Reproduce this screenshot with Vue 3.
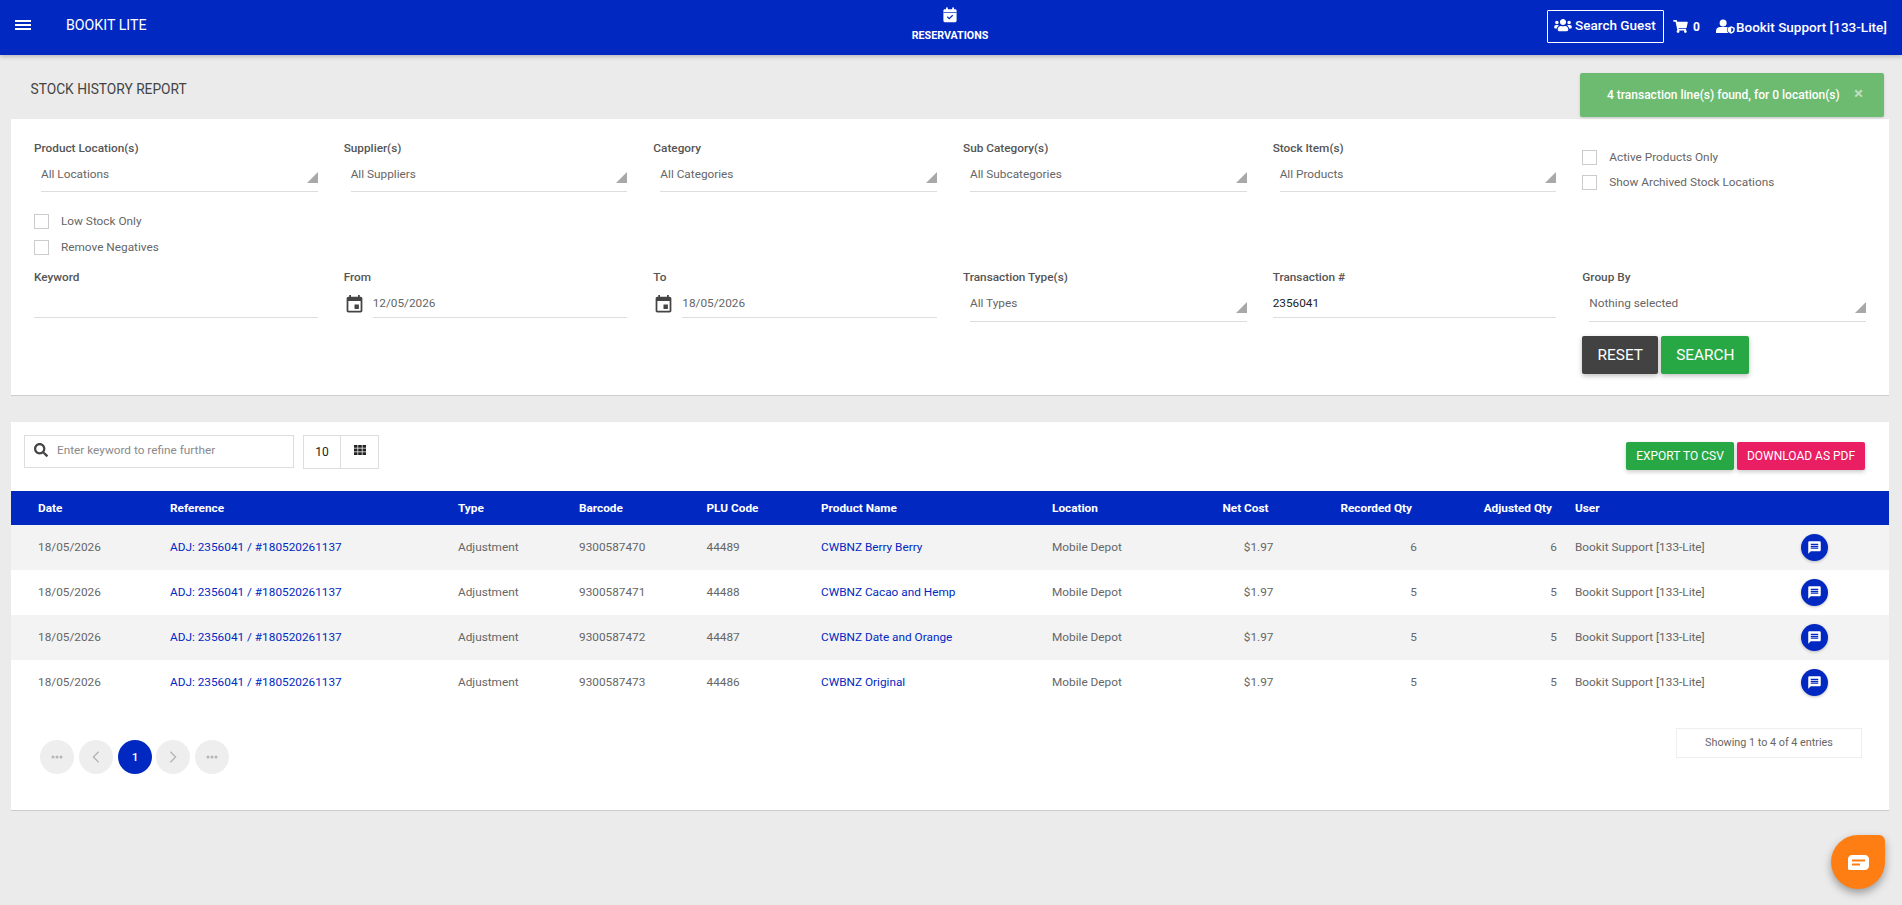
<script setup>
const filtersTop = [
  { label: 'Product Location(s)', value: 'All Locations' },
  { label: 'Supplier(s)', value: 'All Suppliers' },
  { label: 'Category', value: 'All Categories' },
  { label: 'Sub Category(s)', value: 'All Subcategories' },
  { label: 'Stock Item(s)', value: 'All Products' },
]
const rows = [
  { bar: '9300587470', plu: '44489', name: 'CWBNZ Berry Berry', rec: 6, adj: 6 },
  { bar: '9300587471', plu: '44488', name: 'CWBNZ Cacao and Hemp', rec: 5, adj: 5 },
  { bar: '9300587472', plu: '44487', name: 'CWBNZ Date and Orange', rec: 5, adj: 5 },
  { bar: '9300587473', plu: '44486', name: 'CWBNZ Original', rec: 5, adj: 5 },
]
const colWidths = [154, 288, 121, 127.5, 114.5, 231, 120, 111.5, 143.5, 140, 228, 99]
const messagePath = 'M20 2H4c-1.1 0-1.99.9-1.99 2L2 22l4-4h14c1.1 0 2-.9 2-2V4c0-1.1-.9-2-2-2zm-2 12H6v-2h12v2zm0-3H6V9h12v2zm0-3H6V6h12v2z'
const eventPath = 'M17 12h-5v5h5v-5zM16 1v2H8V1H6v2H5c-1.11 0-1.99.9-1.99 2L3 19c0 1.1.89 2 2 2h14c1.1 0 2-.9 2-2V5c0-1.1-.9-2-2-2h-1V1h-2zm3 18H5V8h14v11z'
</script>

<template>
  <div class="page">
    <header class="topbar">
      <div class="brand">
        <span class="burger"><i></i><i></i><i></i></span>
        <span class="brand-name">BOOKIT LITE</span>
      </div>
      <div class="nav-center">
        <svg class="res-icon" viewBox="0 0 16 16" width="16" height="16">
          <path fill="#fff" d="M4 .6h1.8v1.6h4.4V.6H12v1.6h1.2c.8 0 1.4.6 1.4 1.4v10.2c0 .8-.6 1.4-1.4 1.4H2.8c-.8 0-1.4-.6-1.4-1.4V3.600c0-.8.6-1.400 1.400-1.400H4z"/>
          <path fill="#0228c2" d="M1.400 5.100h13.200v.7H1.400z"/>
          <path fill="none" stroke="#0228c2" stroke-width="1.200" d="M5.300 9.800l1.900 1.800 3.500-3.400"/>
        </svg>
        <span class="res-text">RESERVATIONS</span>
      </div>
      <div class="top-right">
        <div class="search-guest">
          <svg viewBox="0 0 640 512" width="18" height="14"><path fill="#fff" d="M96 224c35.300 0 64-28.700 64-64s-28.700-64-64-64-64 28.700-64 64 28.700 64 64 64zm448 0c35.300 0 64-28.700 64-64s-28.700-64-64-64-64 28.700-64 64 28.700 64 64 64zm32 32h-64c-17.600 0-33.500 7.100-45.100 18.600 40.300 22.100 68.900 62 75.100 109.400h66c17.700 0 32-14.300 32-32v-32c0-35.300-28.700-64-64-64zm-256 0c61.900 0 112-50.100 112-112S381.900 32 320 32 208 82.100 208 144s50.100 112 112 112zm76.800 32h-8.300c-20.800 10-43.900 16-68.500 16s-47.600-6-68.500-16h-8.300C179.600 288 128 339.600 128 403.200V432c0 26.500 21.500 48 48 48h288c26.500 0 48-21.500 48-48v-28.800c0-63.600-51.600-115.200-115.200-115.200zm-223.700-13.400C161.500 263.100 145.600 256 128 256H64c-35.300 0-64 28.700-64 64v32c0 17.700 14.300 32 32 32h65.900c6.300-47.400 34.900-87.300 75.200-109.400z"/></svg>
          <span>Search Guest</span>
        </div>
        <div class="cart">
          <svg viewBox="0 0 576 512" width="15" height="13"><path fill="#fff" d="M528.120 301.319l47.273-208C578.806 78.301 567.391 64 551.990 64H159.208l-9.166-44.810C147.758 8.021 137.930 0 126.529 0H24C10.745 0 0 10.745 0 24v16c0 13.255 10.745 24 24 24h69.883l70.248 343.435C147.325 417.100 136 435.222 136 456c0 30.928 25.072 56 56 56s56-25.072 56-56c0-15.674-6.447-29.835-16.824-40h209.647C430.447 426.165 424 440.326 424 456c0 30.928 25.072 56 56 56s56-25.072 56-56c0-22.172-12.888-41.332-31.579-50.405l5.517-24.276c3.413-15.018-8.002-29.319-23.403-29.319H218.117l-6.545-32h293.145c11.206 0 20.920-7.754 23.403-18.681z"/></svg>
          <span>0</span>
        </div>
        <div class="user">
          <svg viewBox="0 0 20 15" width="19" height="15">
            <circle cx="7.500" cy="3.800" r="3.700" fill="#fff"/>
            <path fill="#fff" d="M0 14v-1.800C0 9.600 2 8 4.500 8h6c.9 0 1.700.2 2.400.6-.5.2-.9.400-1.200.6v2c0 1.200.6 2.400 1.400 3.200H.5c-.3 0-.5-.2-.5-.4z"/>
            <path fill="#fff" d="M16 7.300l3.700 1.500v2.400c0 1.800-1.500 3.300-3.700 3.800-2.200-.5-3.700-2-3.700-3.800V8.800z"/>
            <path fill="#0228c2" d="M16 8.800l2.200.9v1.500c0 1-.9 1.900-2.200 2.300z"/>
          </svg>
          <span>Bookit Support [133-Lite]</span>
        </div>
      </div>
    </header>

    <div class="title-row">
      <h1>STOCK HISTORY REPORT</h1>
      <div class="alert">
        <span>4 transaction line(s) found, for 0 location(s)</span>
        <span class="alert-x">×</span>
      </div>
    </div>

    <section class="card filters">
      <div class="grid grid-top">
        <div v-for="f in filtersTop" :key="f.label" class="field">
          <label>{{ f.label }}</label>
          <div class="select"><span>{{ f.value }}</span><i class="tri"></i></div>
        </div>
        <div class="checks checks-right">
          <div class="check"><i class="box"></i><span>Active Products Only</span></div>
          <div class="check"><i class="box"></i><span>Show Archived Stock Locations</span></div>
        </div>
      </div>
      <div class="checks checks-left">
        <div class="check"><i class="box"></i><span>Low Stock Only</span></div>
        <div class="check"><i class="box"></i><span>Remove Negatives</span></div>
      </div>
      <div class="grid grid-bottom">
        <div class="field">
          <label>Keyword</label>
          <div class="input"></div>
        </div>
        <div class="field">
          <label>From</label>
          <div class="date">
            <svg viewBox="0 0 24 24" width="21" height="21"><path fill="#444" :d="eventPath"/></svg>
            <div class="input"><span>12/05/2026</span></div>
          </div>
        </div>
        <div class="field">
          <label>To</label>
          <div class="date">
            <svg viewBox="0 0 24 24" width="21" height="21"><path fill="#444" :d="eventPath"/></svg>
            <div class="input"><span>18/05/2026</span></div>
          </div>
        </div>
        <div class="field">
          <label>Transaction Type(s)</label>
          <div class="select"><span>All Types</span><i class="tri"></i></div>
        </div>
        <div class="field">
          <label>Transaction #</label>
          <div class="input"><span class="dark">2356041</span></div>
        </div>
        <div class="field">
          <label>Group By</label>
          <div class="select"><span>Nothing selected</span><i class="tri"></i></div>
          <div class="actions">
            <button class="btn reset">RESET</button>
            <button class="btn search">SEARCH</button>
          </div>
        </div>
      </div>
    </section>

    <section class="card results">
      <div class="toolbar">
        <div class="refine">
          <svg viewBox="0 0 512 512" width="14" height="14"><path fill="#444" d="M505 442.700L405.300 343c-4.500-4.500-10.600-7-17-7H372c27.600-35.300 44-79.700 44-128C416 93.100 322.900 0 208 0S0 93.100 0 208s93.100 208 208 208c48.300 0 92.700-16.400 128-44v16.300c0 6.400 2.500 12.500 7 17l99.700 99.700c9.400 9.400 24.600 9.400 33.900 0l28.300-28.300c9.400-9.400 9.400-24.600.100-34zM208 336c-70.700 0-128-57.200-128-128 0-70.700 57.200-128 128-128 70.700 0 128 57.200 128 128 0 70.700-57.200 128-128 128z"/></svg>
          <span>Enter keyword to refine further</span>
        </div>
        <div class="pager-size">
          <span class="size">10</span>
          <span class="cols">
            <svg viewBox="0 0 12 10" width="12" height="10"><path fill="#222" d="M0 0h3.500v2.800H0zM4.200 0h3.600v2.800H4.200zM8.500 0H12v2.800H8.500zM0 3.600h3.500v2.800H0zM4.200 3.600h3.600v2.800H4.200zM8.500 3.600H12v2.800H8.500zM0 7.200h3.500V10H0zM4.200 7.200h3.600V10H4.200zM8.500 7.200H12V10H8.500z"/></svg>
          </span>
        </div>
        <div class="exports">
          <button class="btn-sm csv">EXPORT TO CSV</button>
          <button class="btn-sm pdf">DOWNLOAD AS PDF</button>
        </div>
      </div>

      <table>
        <colgroup><col v-for="(w, i) in colWidths" :key="i" :style="{ width: w + 'px' }" /></colgroup>
        <thead>
          <tr>
            <th class="first">Date</th><th>Reference</th><th>Type</th><th>Barcode</th><th>PLU Code</th><th>Product Name</th><th>Location</th>
            <th class="num">Net Cost</th><th class="num">Recorded Qty</th><th class="num">Adjusted Qty</th><th class="user-col">User</th><th></th>
          </tr>
        </thead>
        <tbody>
          <tr v-for="r in rows" :key="r.bar">
            <td class="first">18/05/2026</td>
            <td><a>ADJ: 2356041 / #180520261137</a></td>
            <td>Adjustment</td>
            <td>{{ r.bar }}</td>
            <td>{{ r.plu }}</td>
            <td><a>{{ r.name }}</a></td>
            <td>Mobile Depot</td>
            <td class="val">$1.97</td>
            <td class="val">{{ r.rec }}</td>
            <td class="val">{{ r.adj }}</td>
            <td class="user-col">Bookit Support [133-Lite]</td>
            <td class="act">
              <span class="comment"><svg viewBox="0 0 24 24" width="15" height="15"><path fill="#fff" :d="messagePath"/></svg></span>
            </td>
          </tr>
        </tbody>
      </table>

      <div class="foot">
        <div class="pagination">
          <span class="pg"><svg viewBox="0 0 12 4" width="12" height="4"><g fill="#b5b5b5"><circle cx="2" cy="2" r="1.500"/><circle cx="6" cy="2" r="1.500"/><circle cx="10" cy="2" r="1.500"/></g></svg></span>
          <span class="pg"><svg viewBox="0 0 8 14" width="8" height="12"><path fill="none" stroke="#b5b5b5" stroke-width="1.600" d="M7 1L1 7l6 6"/></svg></span>
          <span class="pg on">1</span>
          <span class="pg next"><svg viewBox="0 0 8 14" width="8" height="12"><path fill="none" stroke="#b5b5b5" stroke-width="1.600" d="M1 1l6 6-6 6"/></svg></span>
          <span class="pg"><svg viewBox="0 0 12 4" width="12" height="4"><g fill="#b5b5b5"><circle cx="2" cy="2" r="1.500"/><circle cx="6" cy="2" r="1.500"/><circle cx="10" cy="2" r="1.500"/></g></svg></span>
        </div>
        <div class="info">Showing 1 to 4 of 4 entries</div>
      </div>
    </section>

    <div class="chat">
      <svg viewBox="0 0 21 15" width="21" height="15">
        <path fill="#fff" d="M4 0h13c2.200 0 4 1.800 4 4v7c0 2.200-1.800 4-4 4H1.500C.7 15 0 14.300 0 13.500V4c0-2.200 1.800-4 4-4z"/>
        <path fill="#ff7e14" d="M4 4.500h13v2H4zM4 8.500h8v2H4z"/>
      </svg>
    </div>
  </div>
</template>

<style>
html, body { margin: 0; padding: 0; background: #ebebeb; }
</style>

<style scoped>
.page {
  position: relative;
  min-height: 905px;
  background: #ebebeb;
  font-family: Roboto, "Liberation Sans", sans-serif;
  font-size: 11.8px;
  color: #666;
  overflow: hidden;
}
.topbar {
  height: 55px;
  background: #0228c2;
  box-shadow: 0 2px 4px rgba(0, 0, 0, 0.2);
  display: grid;
  grid-template-columns: 1fr auto 1fr;
  align-items: center;
  color: #fff;
}
.brand { display: flex; align-items: center; padding: 0 0 5px 15px; }
.burger { display: flex; flex-direction: column; gap: 2px; width: 16px; margin-right: 35px; }
.burger i { display: block; height: 2px; background: #fff; }
.brand-name { font-size: 14.2px; }
.nav-center { align-self: start; display: flex; flex-direction: column; align-items: center; padding: 7.4px 2px 0 0; }
.res-icon { display: block; margin-bottom: 6.6px; }
.res-text { font-size: 10.7px; font-weight: 700; line-height: 12px; }
.top-right { display: flex; align-items: center; justify-content: flex-end; padding: 0 15px 2px 0; font-weight: 500; font-size: 13.5px; }
.search-guest {
  display: flex; align-items: center; gap: 3px;
  width: 117px; height: 33px; box-sizing: border-box;
  border: 1px solid #fff; border-radius: 1px; padding: 0 0 3px 6px;
}
.cart { display: flex; align-items: center; gap: 5px; margin-left: 9px; font-size: 12px; font-weight: 700; }
.user { display: flex; align-items: center; gap: 1px; margin-left: 16px; }
.title-row { position: relative; height: 64px; }
.title-row h1 {
  margin: 0; padding: 26px 0 0 30.5px;
  font-size: 13.75px; line-height: 16px; font-weight: 400; color: #444;
}
.alert {
  position: absolute; left: 1580px; top: 18px; z-index: 2;
  width: 304px; height: 44px; box-sizing: border-box;
  display: flex; align-items: center; padding-left: 27px;
  background: #6dbb70; color: #fff; border-radius: 2px;
  font-size: 12px; font-weight: 500;
  box-shadow: 0 1px 3px rgba(0, 0, 0, 0.15);
}
.alert-x { position: absolute; left: 274px; top: 12px; font-size: 17px; line-height: 17px; font-weight: 700; color: rgba(255, 255, 255, 0.55); }
.card { background: #fff; margin: 0 13px 0 11px; border-bottom: 1px solid #ccc; box-sizing: border-box; }
.filters { height: 277px; padding: 22px 23px 0; }
.grid { display: grid; grid-template-columns: repeat(6, 1fr); column-gap: 26px; }
.grid-top { height: 65px; }
.grid-bottom { margin-top: 15px; }
.field label { display: block; font-weight: 500; color: #555; line-height: 14px; }
.select {
  position: relative; margin-left: 7px; margin-top: 11px; height: 26px; box-sizing: border-box;
  border-bottom: 1px solid #ddd; line-height: 16px; color: #666;
}
.grid-bottom .select { height: 27px; }
.tri { position: absolute; right: 0; top: 6px; width: 0; height: 0; border-left: 11px solid transparent; border-bottom: 11px solid #a8a8a8; }
.grid-bottom .tri { top: 7px; }
.input { height: 23px; margin-top: 11px; border-bottom: 1px solid #ddd; line-height: 16px; box-sizing: border-box; }
.dark { color: #222; }
.date { display: flex; align-items: flex-start; margin-top: 11px; }
.date svg { flex: none; margin: -1px 8px 0 0; }
.date .input { flex: 1; margin-top: 0; }
.checks { display: flex; flex-direction: column; }
.checks-right { padding-top: 8px; gap: 9px; }
.checks-left { gap: 10px; padding-top: 7px; }
.check { display: flex; align-items: center; height: 16px; line-height: 16px; color: #666; }
.box { display: block; width: 15px; height: 15px; border: 1px solid #ccc; box-sizing: border-box; margin-right: 12px; }
.actions { display: flex; gap: 3px; margin-top: 14px; }
.btn {
  height: 38px; border: 0; border-radius: 2px; color: #fff; padding: 0;
  font-family: inherit; font-size: 15.4px; font-weight: 400;
  box-shadow: 0 2px 5px rgba(0, 0, 0, 0.25);
}
.reset { width: 76px; background: #424242; }
.search { width: 88px; background: #28a745; }
.results { height: 389px; margin-top: 26px; }
.toolbar { display: flex; align-items: flex-start; height: 69px; padding: 13px 24px 0 13px; box-sizing: border-box; }
.refine {
  display: flex; align-items: center; gap: 9px; width: 270px; height: 33px; box-sizing: border-box;
  border: 1px solid #ddd; padding: 0 0 4px 9px; color: #8a8a8a;
}
.pager-size { display: flex; margin-left: 9px; width: 76px; height: 34px; box-sizing: border-box; border: 1px solid #ddd; }
.size { width: 36px; display: flex; align-items: center; justify-content: center; color: #222; border-right: 1px solid #ddd; font-size: 12px; }
.cols { flex: 1; display: flex; align-items: center; justify-content: center; padding-bottom: 4px; }
.exports { margin-left: auto; display: flex; gap: 3px; padding-top: 7px; }
.btn-sm {
  height: 28px; border: 0; border-radius: 2px; color: #fff; padding: 0;
  font-family: inherit; font-size: 12px; font-weight: 400;
  box-shadow: 0 2px 4px rgba(0, 0, 0, 0.2);
}
.csv { width: 108px; background: #28a745; }
.pdf { width: 128px; background: #e91e63; }
table { width: 1878px; table-layout: fixed; border-collapse: collapse; }
th {
  height: 34px; padding: 0 5px; background: #0228c2; color: #fff; text-align: left;
  font-weight: 700; white-space: nowrap;
}
th.num { text-align: right; padding-right: 10px; }
th.first { padding-left: 27px; }
td { height: 45px; box-sizing: border-box; padding: 0 5px 2px; white-space: nowrap; }
td.first { padding-left: 27px; }
tbody tr:nth-child(odd) td { background: #f3f3f3; }
td.val { text-align: right; }
th.user-col, td.user-col { padding-left: 13px; }
td.act { padding: 0 0 0 10.5px; }
a { color: #0228c2; }
.comment { display: flex; align-items: center; justify-content: center; width: 27px; height: 27px; border-radius: 50%; background: #0228c2; box-shadow: 0 1px 3px rgba(0, 0, 0, 0.25); }
.foot { display: flex; justify-content: space-between; padding: 23px 27px 0 29px; align-items: flex-start; }
.pagination { display: flex; gap: 5px; margin-top: 12px; }
.pg { width: 34px; height: 34px; border-radius: 50%; background: #eee; display: flex; align-items: center; justify-content: center; }
.pg.on { background: #0228c2; color: #fff; font-weight: 500; }
.pg.next { margin-left: -1px; }
.info { width: 186px; height: 30px; box-sizing: border-box; border: 1px solid #eee; display: flex; align-items: center; justify-content: center; font-size: 10.8px; padding-bottom: 1px; }
.chat {
  position: absolute; left: 1831px; top: 835px; width: 54px; height: 54px;
  background: #ff7e14; border-radius: 50% 6px 50% 50%;
  box-shadow: 0 4px 8px rgba(0, 0, 0, 0.35);
  display: flex; align-items: center; justify-content: center;
}
</style>
